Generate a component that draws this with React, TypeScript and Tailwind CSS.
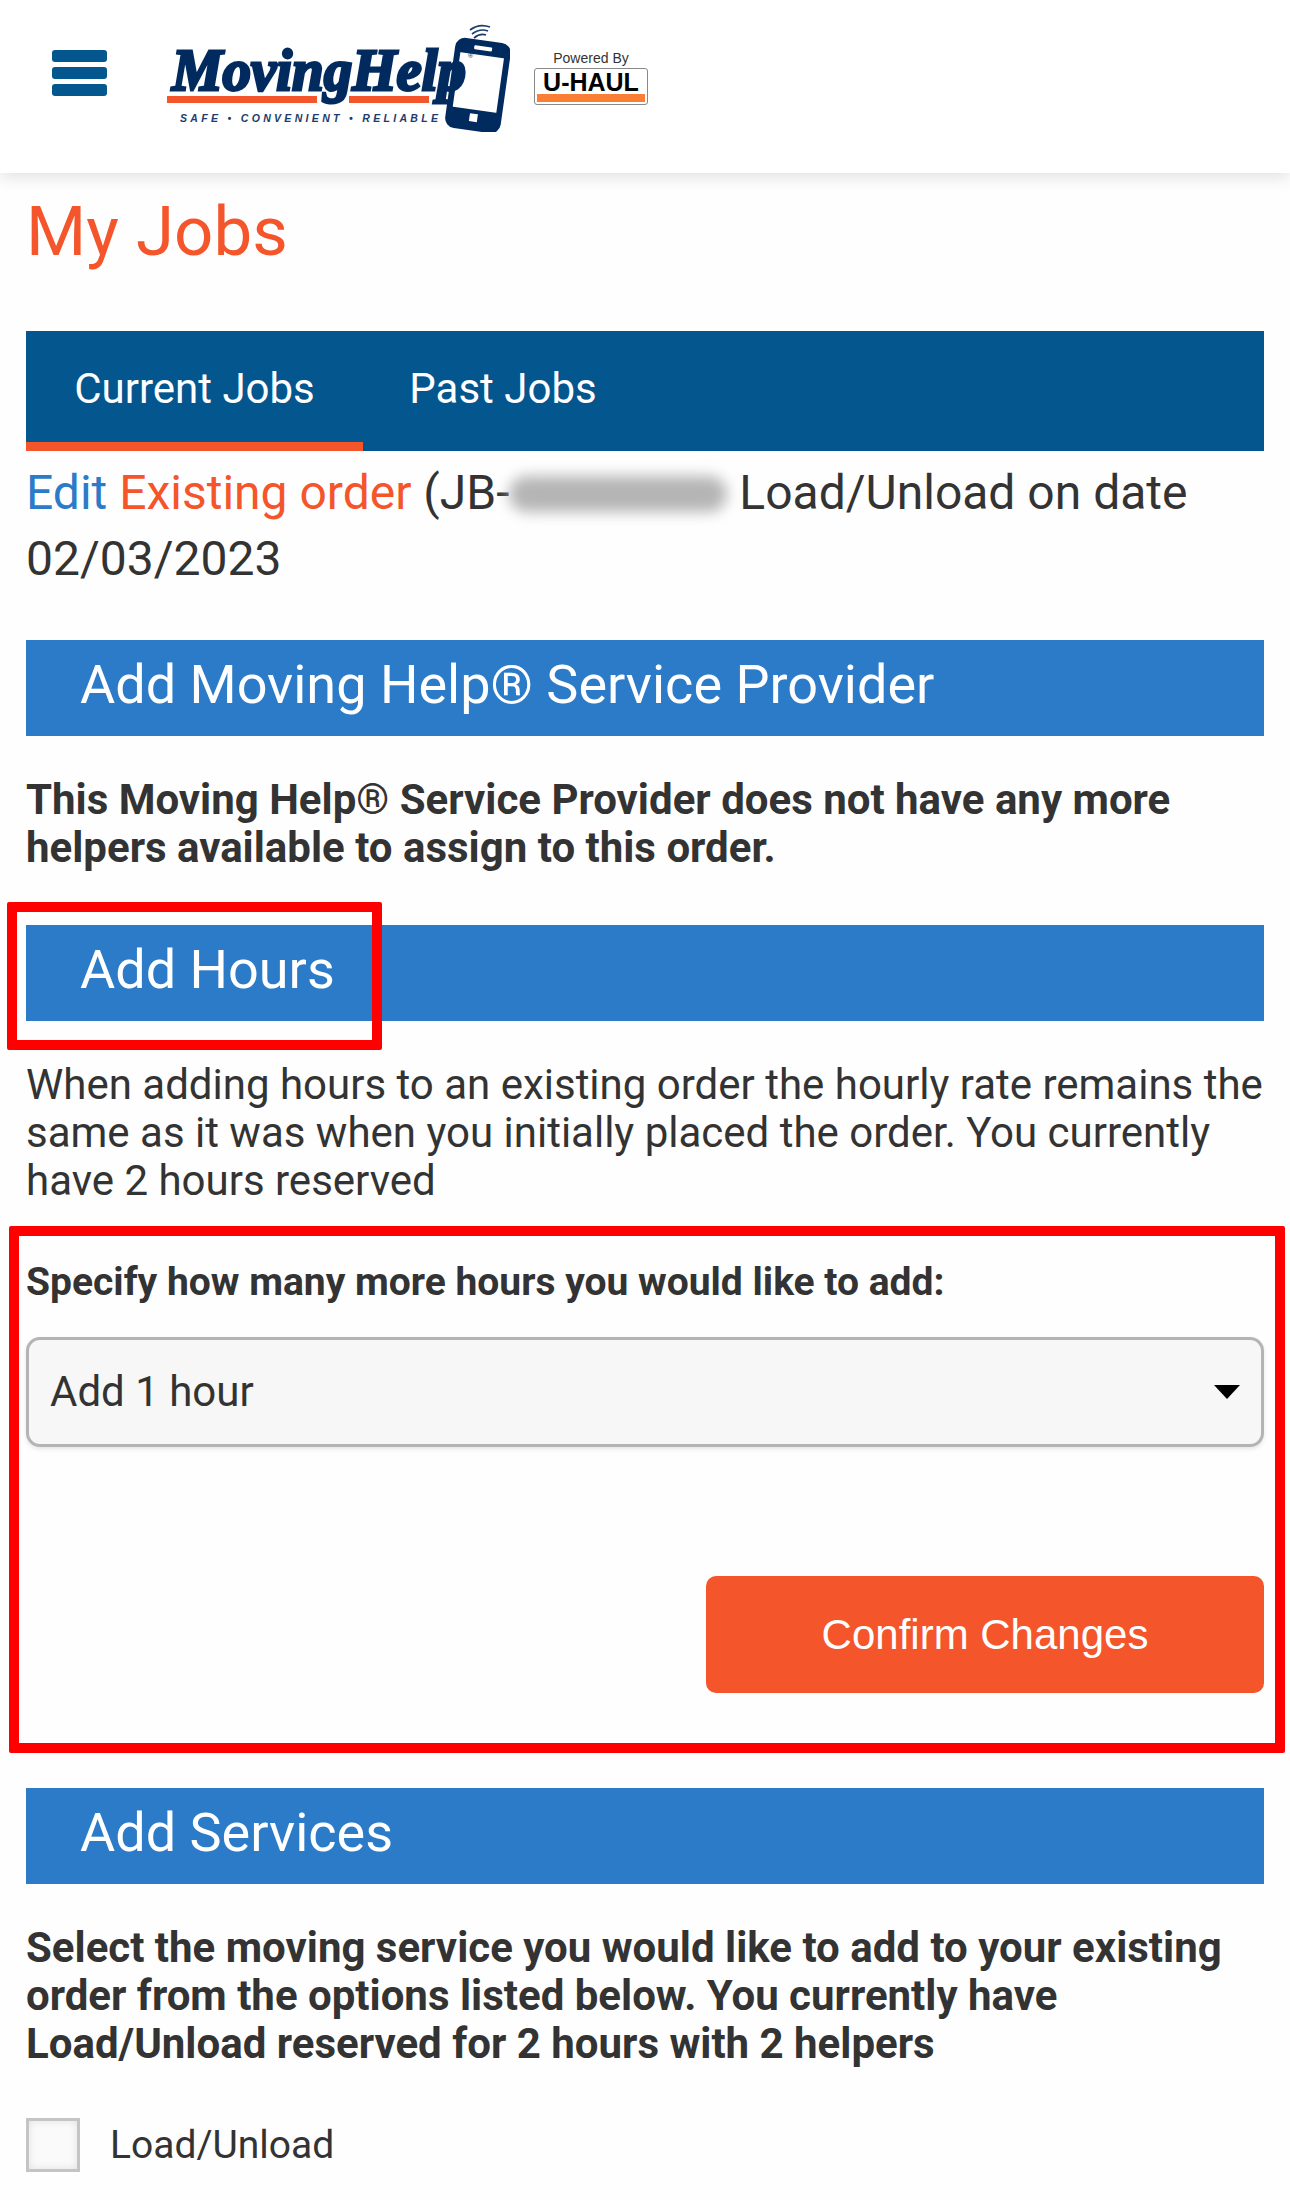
const roboto = "font-['Roboto',sans-serif]";

function SectionBar({ title }: { title: string }) {
  return (
    <h2 className="h-[96px] bg-[#2c7bc8] pl-[54px] text-[54px] leading-[90px] text-white">
      {title}
    </h2>
  );
}

function Logo() {
  return (
    <svg width="345" height="110" viewBox="0 0 345 110" className="shrink-0">
      <g transform="rotate(8 313 63)">
        <rect x="288" y="21" width="50" height="85" rx="7" fill="#fff" stroke="#012a5e" strokeWidth="6" />
        <rect x="288" y="21" width="50" height="12" fill="#012a5e" />
        <rect x="288" y="88" width="50" height="18" fill="#012a5e" />
        <rect x="304" y="24" width="18" height="4" rx="1" fill="#fff" />
        <rect x="309" y="92" width="8" height="8" fill="#fff" />
      </g>
      <text
        x="7"
        y="68"
        textLength="294"
        lengthAdjust="spacingAndGlyphs"
        fontFamily="'Liberation Serif', serif"
        fontWeight="700"
        fontStyle="italic"
        fontSize="60"
        fill="#012a5e"
        stroke="#012a5e"
        strokeWidth="3"
      >
        MovingHelp
      </text>
      <rect x="2" y="74" width="150" height="7" fill="#f4552a" />
      <rect x="184" y="74" width="80" height="7" fill="#f4552a" />
      <text
        x="15"
        y="100"
        textLength="258"
        fontFamily="'Liberation Sans', sans-serif"
        fontWeight="700"
        fontStyle="italic"
        fontSize="10.5"
        fill="#1c3c6c"
      >
        SAFE • CONVENIENT • RELIABLE
      </text>
      <g fill="none" stroke="#1c3c6c" strokeWidth="1.7">
        <path d="M305 8 Q314 1 325 5" />
        <path d="M307 12 Q315 6 323 9" />
        <path d="M309 16 Q315 11 321 13" />
      </g>
      <text x="303" y="36" fontSize="7" fill="#012a5e" fontFamily="'Liberation Sans', sans-serif">
        ®
      </text>
    </svg>
  );
}

function UHaul() {
  return (
    <div className="flex w-[114px] shrink-0 flex-col items-center">
      <span className="font-['Liberation_Sans',sans-serif] text-[14px] leading-[20px] text-[#333]">Powered By</span>
      <div className="flex h-[37px] w-[114px] flex-col justify-between overflow-hidden rounded-[3px] border border-[#888] bg-white p-[2px]">
        <span className="text-center font-['Liberation_Sans',sans-serif] text-[25px] leading-[23px] font-bold text-black">
          U-HAUL
        </span>
        <div className="h-[8px] bg-[#f97f36]" />
      </div>
    </div>
  );
}

export default function App() {
  return (
    <div className={`h-[2200px] overflow-hidden bg-[#fefefe] text-[#333] ${roboto}`}>
      <header className="flex h-[173px] items-center bg-white pr-4 pl-[52px] shadow-[0_4px_16px_rgba(0,0,0,0.12)]">
        <button aria-label="Menu" className="mb-[28px] flex w-[55px] flex-col gap-[5px]">
          <span className="h-[12px] rounded-[3px] bg-[#04568f]" />
          <span className="h-[12px] rounded-[3px] bg-[#04568f]" />
          <span className="h-[12px] rounded-[3px] bg-[#04568f]" />
        </button>
        <div className="ml-[58px] flex items-center gap-[24px] pb-[20px]">
          <Logo />
          <UHaul />
        </div>
      </header>

      <main className="px-[26px]">
        <h1 className="pt-[22px] text-[69px] leading-[74px] text-[#f4552a]">My Jobs</h1>

        <nav className="mt-[62px] flex h-[120px] bg-[#04568f] text-[42px] text-white">
          <a className="flex h-full w-[337px] items-center justify-center border-b-[9px] border-[#f4552a] pt-[3px]">
            Current Jobs
          </a>
          <a className="flex h-full w-[280px] items-center justify-center pb-[6px]">Past Jobs</a>
        </nav>

        <p className="mt-[9px] text-[48px] leading-[66px]">
          <span className="text-[#2c7bc8]">Edit</span> <span className="text-[#f4552a]">Existing order</span> (JB-
          <span className="inline-block h-[36px] w-[218px] translate-y-[3px] rounded-full bg-[#b5b5b5] blur-[7px]" /> Load/Unload on date
          02/03/2023
        </p>

        <div className="mt-[48px]">
          <SectionBar title="Add Moving Help® Service Provider" />
        </div>
        <p className="mt-[40px] text-[42px] leading-[48px] font-bold">
          This Moving Help® Service Provider does not have any more helpers available to assign to this order.
        </p>

        <div className="relative mt-[53px]">
          <SectionBar title="Add Hours" />
          {/* red annotation */}
          <div className="absolute top-[-23px] left-[-19px] h-[148px] w-[375px] rounded-[2px] border-[10px] border-[#ff0000]" />
        </div>
        <p className="mt-[40px] text-[42px] leading-[48px]">
          When adding hours to an existing order the hourly rate remains the same as it was when you initially placed the
          order. You currently have 2 hours reserved
        </p>

        <div className="relative mt-[53px]">
          <div className="absolute top-[-32px] right-[-21px] bottom-[-60px] left-[-17px] rounded-[2px] border-[10px] border-[#ff0000]" />
          <label className="block text-[39px] leading-[48px] font-bold">Specify how many more hours you would like to add:</label>
          <div className="relative mt-[31px]">
            <select className="h-[110px] w-full appearance-none rounded-[14px] border-[3px] border-[#b4b4b4] bg-[#f7f7f7] pb-[2px] pl-[21px] text-[42px] shadow-[0_2px_4px_rgba(0,0,0,0.1)]">
              <option>Add 1 hour</option>
            </select>
            <svg width="26" height="14" viewBox="0 0 26 14" className="absolute top-[48px] right-[24px]">
              <path d="M0 0H26L13 14Z" fill="#000" />
            </svg>
          </div>
          <div className="mt-[129px] flex justify-end">
            <button className="h-[117px] w-[558px] rounded-[10px] bg-[#f4552a] font-['Liberation_Sans',sans-serif] text-[42px] text-white">
              Confirm Changes
            </button>
          </div>
        </div>

        <div className="mt-[95px]">
          <SectionBar title="Add Services" />
        </div>
        <p className="mt-[40px] text-[42px] leading-[48px] font-bold">
          Select the moving service you would like to add to your existing order from the options listed below. You currently
          have Load/Unload reserved for 2 hours with 2 helpers
        </p>

        <label className="mt-[48px] flex items-center gap-[30px] text-[39px]">
          <span className="h-[54px] w-[54px] border-[3px] border-[#c4c4c4] bg-[#fafafa] shadow-[inset_0_0_8px_rgba(0,0,0,0.1)]" />
          Load/Unload
        </label>
      </main>
    </div>
  );
}
